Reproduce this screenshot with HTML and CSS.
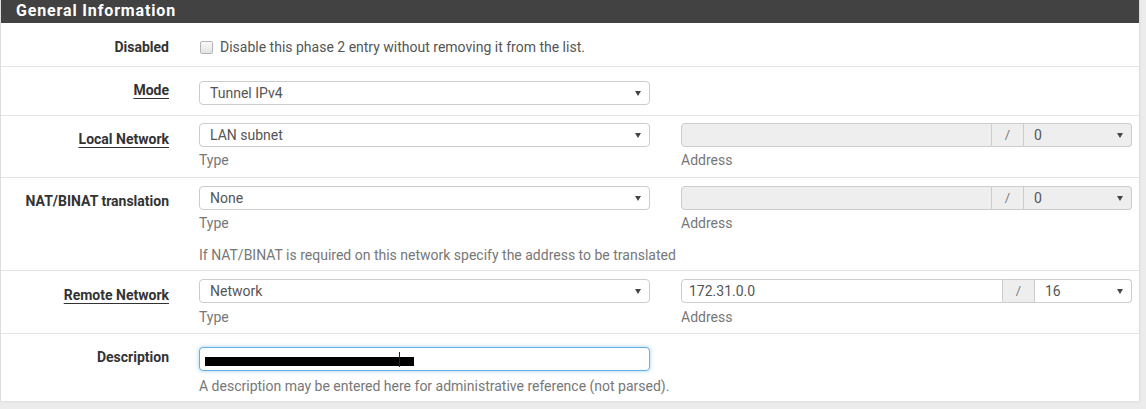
FILE: index.html
```html
<!DOCTYPE html>
<html>
<head>
<meta charset="utf-8">
<link rel="stylesheet" href="styles.css">
</head>
<body>
<div class="panel">
  <div class="panel-heading">General Information</div>

  <div class="row r1">
    <div class="label">Disabled</div>
    <div class="content">
      <label class="check"><span class="box"></span>Disable this phase 2 entry without removing it from the list.</label>
    </div>
  </div>

  <div class="row r2">
    <div class="label"><span class="ul">Mode</span></div>
    <div class="content">
      <div class="cols">
        <div class="col">
          <div class="select"><span>Tunnel IPv4</span><svg class="arrow" width="6" height="5" viewBox="0 0 6 5"><path d="M0 0H6L3 5Z"/></svg></div>
        </div>
      </div>
    </div>
  </div>

  <div class="row r3">
    <div class="label"><span class="ul">Local Network</span></div>
    <div class="content">
      <div class="cols">
        <div class="col">
          <div class="select"><span>LAN subnet</span><svg class="arrow" width="6" height="5" viewBox="0 0 6 5"><path d="M0 0H6L3 5Z"/></svg></div>
          <div class="help">Type</div>
        </div>
        <div class="col">
          <div class="group">
            <div class="input disabled grow"></div>
            <div class="addon">/</div>
            <div class="select disabled mask w108"><span>0</span><svg class="arrow" width="6" height="5" viewBox="0 0 6 5"><path d="M0 0H6L3 5Z"/></svg></div>
          </div>
          <div class="help">Address</div>
        </div>
      </div>
    </div>
  </div>

  <div class="row r4">
    <div class="label">NAT/BINAT translation</div>
    <div class="content">
      <div class="cols">
        <div class="col">
          <div class="select"><span>None</span><svg class="arrow" width="6" height="5" viewBox="0 0 6 5"><path d="M0 0H6L3 5Z"/></svg></div>
          <div class="help">Type</div>
        </div>
        <div class="col">
          <div class="group">
            <div class="input disabled grow"></div>
            <div class="addon">/</div>
            <div class="select disabled mask w108"><span>0</span><svg class="arrow" width="6" height="5" viewBox="0 0 6 5"><path d="M0 0H6L3 5Z"/></svg></div>
          </div>
          <div class="help">Address</div>
        </div>
      </div>
      <div class="help note">If NAT/BINAT is required on this network specify the address to be translated</div>
    </div>
  </div>

  <div class="row r5">
    <div class="label"><span class="ul">Remote Network</span></div>
    <div class="content">
      <div class="cols">
        <div class="col">
          <div class="select"><span>Network</span><svg class="arrow" width="6" height="5" viewBox="0 0 6 5"><path d="M0 0H6L3 5Z"/></svg></div>
          <div class="help">Type</div>
        </div>
        <div class="col">
          <div class="group">
            <div class="input grow addr">172.31.0.0</div>
            <div class="addon">/</div>
            <div class="select mask w97"><span>16</span><svg class="arrow" width="6" height="5" viewBox="0 0 6 5"><path d="M0 0H6L3 5Z"/></svg></div>
          </div>
          <div class="help">Address</div>
        </div>
      </div>
    </div>
  </div>

  <div class="row r6">
    <div class="label">Description</div>
    <div class="content">
      <div class="cols">
        <div class="col">
          <div class="input focus"><span class="redact"></span><span class="caret"></span></div>
        </div>
      </div>
      <div class="help">A description may be entered here for administrative reference (not parsed).</div>
    </div>
  </div>
</div>
</body>
</html>
```

FILE: styles.css
```css
html, body {
  margin: 0;
  padding: 0;
}
body {
  background: #ececec;
  font-family: Roboto, "Liberation Sans", sans-serif;
  font-size: 14px;
  line-height: 20px;
  color: #555;
  width: 1146px;
  height: 409px;
  overflow: hidden;
}
.panel {
  width: 1138px;
  background: #fff;
  border-left: 1px solid #ddd;
  border-right: 1px solid #ddd;
  box-shadow: 0 1px 2px rgba(0,0,0,0.06);
}
.panel-heading {
  height: 23px;
  line-height: 21px;
  background: #424242;
  color: #fff;
  font-weight: bold;
  font-size: 16px;
  letter-spacing: 0.85px;
  padding-left: 15px;
}
.row {
  display: flex;
  border-top: 1px solid #e4e4e4;
  box-sizing: border-box;
}
.row.r1 { border-top: none; height: 43px; }
.row.r2 { height: 49px; }
.row.r3 { height: 62px; }
.row.r4 { height: 93px; }
.row.r5 { height: 63px; }
.row.r6 { height: 68px; }

.label {
  width: 168px;
  flex: none;
  text-align: right;
  font-weight: bold;
  color: #333;
  padding-top: 13px;
}
.r1 .label { padding-top: 14px; }
.r5 .label { padding-top: 14px; }
.ul {
  text-decoration: underline;
  text-underline-offset: 3px;
  text-decoration-thickness: 1px;
}
.content {
  margin-left: 30px;
  width: 933px;
}
.r1 .content { padding-top: 14px; }
.r2 .content { padding-top: 14px; }
.r3 .content { padding-top: 7px; }
.r4 .content { padding-top: 8px; }
.r5 .content { padding-top: 8px; }
.r6 .content { padding-top: 13px; }

.cols {
  display: flex;
  gap: 31px;
}
.col {
  width: 451px;
  flex: none;
}
.check {
  display: flex;
  align-items: center;
  color: #555;
}
.box {
  width: 11px;
  height: 11px;
  border: 1px solid #b5b5b5;
  border-radius: 2px;
  background: linear-gradient(#fafafa, #e3e3e3);
  margin-left: 1px;
  margin-right: 7px;
}
.select, .input {
  box-sizing: border-box;
  height: 24px;
  border: 1px solid #ccc;
  border-radius: 4px;
  background: #fff;
  color: #555;
  display: flex;
  align-items: center;
  line-height: 20px;
}
.select {
  justify-content: space-between;
  padding: 0 8px 0 10px;
}
.arrow {
  fill: #444;
  flex: none;
}
.help {
  color: #777;
  margin-top: 4px;
}
.r3 .help { margin-top: 3px; }
.r4 .help { margin-top: 3px; }
.r4 .note { margin-top: 12px; }
.r6 .help { margin-top: 5px; }

.group {
  display: flex;
}
.grow { flex: 1; border-radius: 4px 0 0 4px; }
.disabled { background: #eee; }
.addon {
  width: 32px;
  box-sizing: border-box;
  height: 24px;
  background: #eee;
  border: 1px solid #ccc;
  border-left: none;
  color: #777;
  font-size: 13px;
  text-align: center;
  line-height: 22px;
}
.mask {
  border-left: none;
  border-radius: 0 4px 4px 0;
}
.w108 { width: 108px; flex: none; }
.w97 { width: 97px; flex: none; }
.addr { padding-left: 7px; }

.input.focus {
  border-color: #66afe9;
  box-shadow: 0 0 4px rgba(102,175,233,0.6);
  position: relative;
}
.redact {
  position: absolute;
  left: 5px;
  top: 9px;
  width: 209px;
  height: 9px;
  background: #000;
}
.caret {
  position: absolute;
  left: 199px;
  top: 4px;
  width: 1px;
  height: 15px;
  background: #222;
}
```
